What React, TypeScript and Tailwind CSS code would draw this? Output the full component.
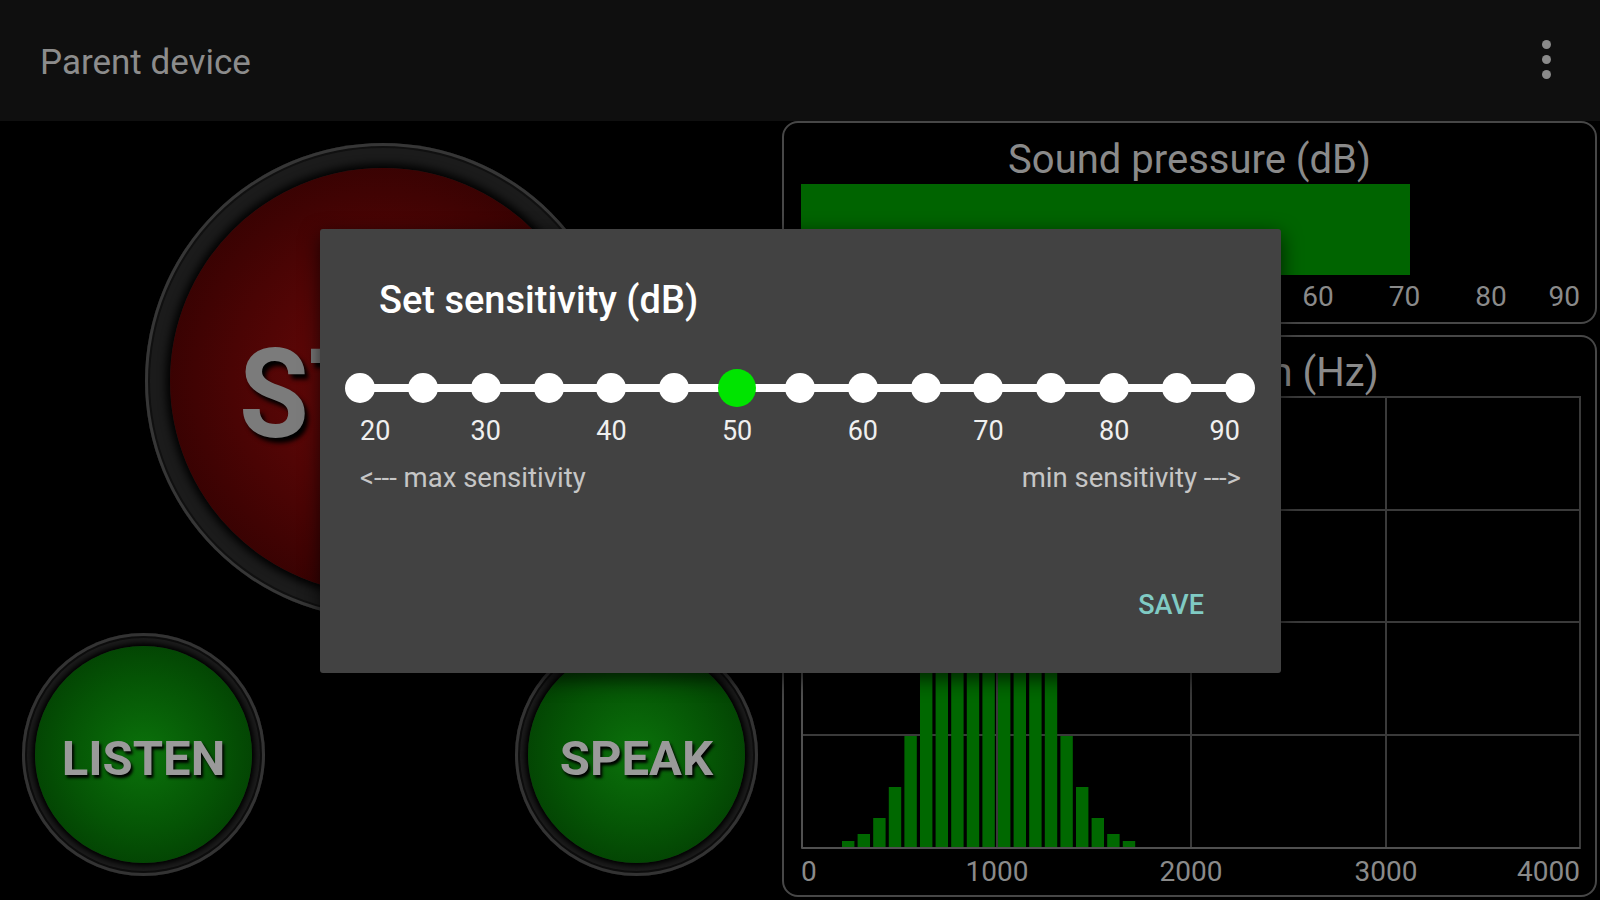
import { type FC } from 'react'

const ticks = [20, 25, 30, 35, 40, 45, 50, 55, 60, 65, 70, 75, 80, 85, 90]
const tickLabels = [20, 30, 40, 50, 60, 70, 80, 90]
const selected = 50

// spectrum histogram, heights in px from baseline
const spectrum = [6, 13, 29, 60, 111, 250, 300, 330, 340, 345, 340, 330, 300, 250, 111, 60, 29, 13, 6]

const RoundButton: FC<{ label: string; size: 'lg' | 'sm' }> = ({ label, size }) => {
  if (size === 'lg') {
    return (
      <div className="w-[476px] h-[476px] rounded-full bg-[#1b1b1b] shadow-[inset_0_0_0_3px_#363636,inset_0_0_0_5px_#101010] p-[25px]">
        <div className="w-full h-full rounded-full bg-[radial-gradient(circle,#6e0909_0%,#4a0404_50%,#230000_100%)] shadow-[0_0_8px_4px_#000] flex items-center justify-center">
          <span className="mt-[27px] text-[124px] font-bold leading-none text-[#7b7b7b] scale-x-[0.91] [text-shadow:4px_5px_5px_#000]">
            {label}
          </span>
        </div>
      </div>
    )
  }
  return (
    <div className="w-[243px] h-[243px] rounded-full bg-[#1b1b1b] shadow-[inset_0_0_0_3px_#333,inset_0_0_0_5px_#0d0d0d] p-[13px]">
      <div className="w-full h-full rounded-full bg-[radial-gradient(circle,#0b720b_0%,#055405_50%,#013201_100%)] shadow-[0_0_5px_3px_#000] flex items-center justify-center">
        <span className="mt-[8px] text-[49px] font-bold leading-none text-[#9a9a9a] [text-shadow:2px_3px_3px_#000]">
          {label}
        </span>
      </div>
    </div>
  )
}

const PressurePanel: FC = () => {
  const labels = [0, 10, 20, 30, 40, 50, 60, 70, 80, 90]
  return (
    <div className="h-[203px] rounded-[16px] border-2 border-[#474747] pt-[17px]">
      <div className="text-[40px] leading-none text-center text-[#8a8a8a]">Sound pressure (dB)</div>
      <svg width="811" height="142" className="block">
        <rect x="17" y="4" width="609" height="91" fill="#006400" />
        {labels.map((v) => (
          <text
            key={v}
            x={v === 90 ? 796 : 15 + v * 8.65}
            y="126"
            fontSize="28"
            fill="#8a8a8a"
            textAnchor={v === 90 ? 'end' : v === 0 ? 'start' : 'middle'}
            fontFamily="Roboto, sans-serif"
          >
            {v}
          </text>
        ))}
      </svg>
    </div>
  )
}

const SpectrumPanel: FC = () => {
  const vLines = [213, 407, 602]
  const hLines = [118, 230, 343]
  const xLabels = [
    { t: '0', x: 17, a: 'start' },
    { t: '1000', x: 213, a: 'middle' },
    { t: '2000', x: 407, a: 'middle' },
    { t: '3000', x: 602, a: 'middle' },
    { t: '4000', x: 796, a: 'end' },
  ]
  return (
    <div className="h-[562px] rounded-[16px] border-2 border-[#474747] pt-[16px]">
      <div className="text-[40px] leading-none text-center text-[#8a8a8a]">Sound spectrum (Hz)</div>
      <svg width="811" height="502" className="block">
        <rect x="18" y="4" width="778" height="451" fill="none" stroke="#3a3a3a" strokeWidth="2" />
        {vLines.map((x) => (
          <line key={x} x1={x} y1="4" x2={x} y2="455" stroke="#3a3a3a" strokeWidth="2" />
        ))}
        {hLines.map((y) => (
          <line key={y} x1="18" y1={y - 1} x2="796" y2={y - 1} stroke="#3a3a3a" strokeWidth="2" />
        ))}
        {spectrum.map((h, i) => (
          <rect key={i} x={58 + i * 15.6} y={454 - h} width="12.4" height={h} fill="#006800" />
        ))}
        <line x1="18" y1="455" x2="796" y2="455" stroke="#505050" strokeWidth="2" />
        <line x1="18" y1="4" x2="18" y2="455" stroke="#505050" strokeWidth="2" />
        {xLabels.map((l) => (
          <text
            key={l.t}
            x={l.x}
            y="488"
            fontSize="28"
            fill="#8a8a8a"
            textAnchor={l.a as 'start' | 'middle' | 'end'}
            fontFamily="Roboto, sans-serif"
          >
            {l.t}
          </text>
        ))}
      </svg>
    </div>
  )
}

const SensitivityDialog: FC = () => (
  <div className="absolute left-[320px] top-[229px] w-[961px] h-[444px] bg-[#424242] rounded-[3px] shadow-[0_6px_20px_rgba(0,0,0,0.7)] flex flex-col pt-[52px]">
    <div className="pl-[59px] text-[38px] font-medium leading-none text-white">Set sensitivity (dB)</div>

    {/* Slider */}
    <div className="relative mt-[50px] ml-[25px] w-[910px] h-[38px] flex items-center justify-between">
      <div className="absolute left-[15px] right-[15px] top-[15px] h-[8px] bg-white" />
      {ticks.map((t) => (
        <div key={t} className="relative w-[30px] h-[30px] flex items-center justify-center">
          {t === selected ? (
            <div className="w-[38px] h-[38px] shrink-0 rounded-full bg-[#00e400]" />
          ) : (
            <div className="w-[30px] h-[30px] shrink-0 rounded-full bg-white" />
          )}
        </div>
      ))}
    </div>

    <div className="mt-[11px] ml-[40px] w-[880px] flex justify-between text-[27px] leading-none text-[#efefef]">
      {tickLabels.map((v, i) => (
        <div
          key={v}
          className={
            i === 0
              ? 'w-0 flex justify-start'
              : i === tickLabels.length - 1
                ? 'w-0 flex justify-end'
                : 'w-0 flex justify-center'
          }
        >
          <span className="whitespace-nowrap">{v}</span>
        </div>
      ))}
    </div>

    <div className="mt-[19px] ml-[40px] w-[881px] flex justify-between text-[27.5px] leading-none text-[#c6c6c6]">
      <span>&lt;--- max sensitivity</span>
      <span>min sensitivity ---&gt;</span>
    </div>

    <div className="mt-[100px] flex justify-end pr-[77px]">
      <button className="text-[27px] font-medium leading-none text-[#80cbc4]">SAVE</button>
    </div>
  </div>
)

export default function App() {
  return (
    <div className="relative w-[1600px] h-[900px] overflow-hidden bg-black font-['Roboto',sans-serif]">
      <header className="h-[121px] bg-[#0f0f0f] flex items-start justify-between pl-[40px] pr-[49px]">
        <div className="pt-[45px] text-[35px] leading-none text-[#8c8c8c]">Parent device</div>
        <div className="pt-[40px] flex flex-col gap-[6px]">
          <span className="w-[9px] h-[9px] rounded-full bg-[#8a8a8a]" />
          <span className="w-[9px] h-[9px] rounded-full bg-[#8a8a8a]" />
          <span className="w-[9px] h-[9px] rounded-full bg-[#8a8a8a]" />
        </div>
      </header>

      <main className="flex h-[779px]">
        <section className="flex-1 flex flex-col">
          <div className="pl-[145px] pt-[22px]">
            <RoundButton label="STOP" size="lg" />
          </div>
          <div className="flex pl-[22px] pt-[14px] gap-[250px]">
            <RoundButton label="LISTEN" size="sm" />
            <RoundButton label="SPEAK" size="sm" />
          </div>
        </section>

        <aside className="w-[815px] mr-[3px] flex flex-col gap-[11px]">
          <PressurePanel />
          <SpectrumPanel />
        </aside>
      </main>

      <SensitivityDialog />
    </div>
  )
}
